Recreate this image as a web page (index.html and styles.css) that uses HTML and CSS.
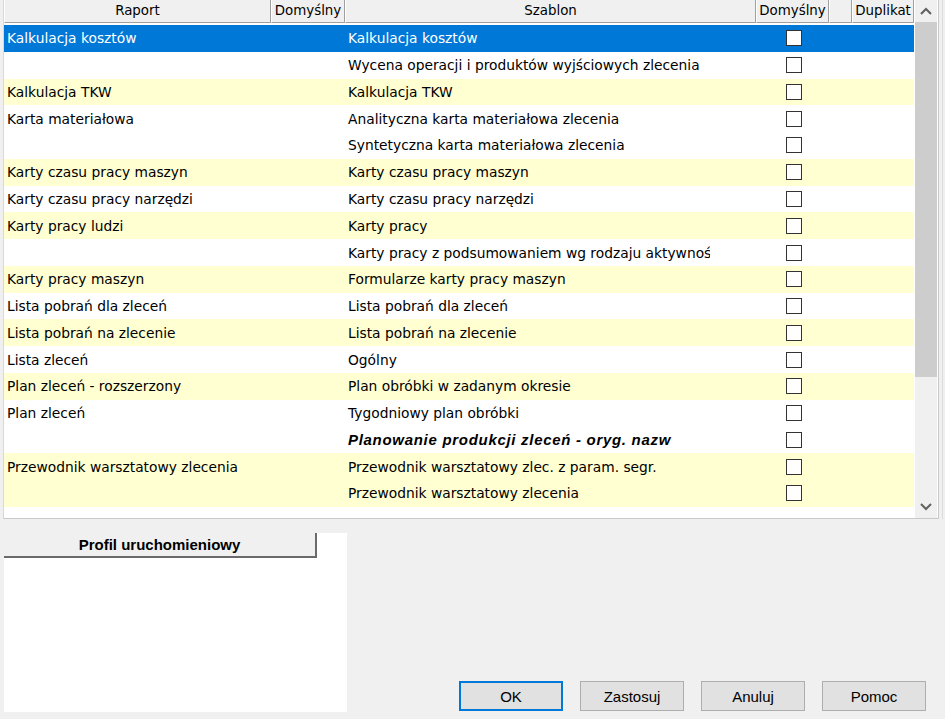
FILE: index.html
```html
<!DOCTYPE html>
<html lang="pl">
<head>
    <meta charset="UTF-8">
    <title>Raporty i szablony</title>
    <link rel="stylesheet" href="styles.css">
</head>
<body>
    <div class="grid-box">
        <div class="grid">
            <div class="row head">
                <div class="hcell">Raport</div>
                <div class="hcell">Domyślny</div>
                <div class="hcell">Szablon</div>
                <div class="hcell">Domyślny</div>
                <div class="hcell"></div>
                <div class="hcell">Duplikat</div>
            </div>
            <div class="rows">
                <div class="row sel"><div class="cell">Kalkulacja kosztów</div><div class="cell"></div><div class="cell">Kalkulacja kosztów</div><div class="cell chk"><span class="box"></span></div><div class="cell"></div><div class="cell"></div></div>
                <div class="row"><div class="cell"></div><div class="cell"></div><div class="cell">Wycena operacji i produktów wyjściowych zlecenia</div><div class="cell chk"><span class="box"></span></div><div class="cell"></div><div class="cell"></div></div>
                <div class="row alt"><div class="cell">Kalkulacja TKW</div><div class="cell"></div><div class="cell">Kalkulacja TKW</div><div class="cell chk"><span class="box"></span></div><div class="cell"></div><div class="cell"></div></div>
                <div class="row"><div class="cell">Karta materiałowa</div><div class="cell"></div><div class="cell">Analityczna karta materiałowa zlecenia</div><div class="cell chk"><span class="box"></span></div><div class="cell"></div><div class="cell"></div></div>
                <div class="row"><div class="cell"></div><div class="cell"></div><div class="cell">Syntetyczna karta materiałowa zlecenia</div><div class="cell chk"><span class="box"></span></div><div class="cell"></div><div class="cell"></div></div>
                <div class="row alt"><div class="cell">Karty czasu pracy maszyn</div><div class="cell"></div><div class="cell">Karty czasu pracy maszyn</div><div class="cell chk"><span class="box"></span></div><div class="cell"></div><div class="cell"></div></div>
                <div class="row"><div class="cell">Karty czasu pracy narzędzi</div><div class="cell"></div><div class="cell">Karty czasu pracy narzędzi</div><div class="cell chk"><span class="box"></span></div><div class="cell"></div><div class="cell"></div></div>
                <div class="row alt"><div class="cell">Karty pracy ludzi</div><div class="cell"></div><div class="cell">Karty pracy</div><div class="cell chk"><span class="box"></span></div><div class="cell"></div><div class="cell"></div></div>
                <div class="row"><div class="cell"></div><div class="cell"></div><div class="cell"><span class="clip">Karty pracy z podsumowaniem wg rodzaju aktywności</span></div><div class="cell chk"><span class="box"></span></div><div class="cell"></div><div class="cell"></div></div>
                <div class="row alt"><div class="cell">Karty pracy maszyn</div><div class="cell"></div><div class="cell">Formularze karty pracy maszyn</div><div class="cell chk"><span class="box"></span></div><div class="cell"></div><div class="cell"></div></div>
                <div class="row"><div class="cell">Lista pobrań dla zleceń</div><div class="cell"></div><div class="cell">Lista pobrań dla zleceń</div><div class="cell chk"><span class="box"></span></div><div class="cell"></div><div class="cell"></div></div>
                <div class="row alt"><div class="cell">Lista pobrań na zlecenie</div><div class="cell"></div><div class="cell">Lista pobrań na zlecenie</div><div class="cell chk"><span class="box"></span></div><div class="cell"></div><div class="cell"></div></div>
                <div class="row"><div class="cell">Lista zleceń</div><div class="cell"></div><div class="cell">Ogólny</div><div class="cell chk"><span class="box"></span></div><div class="cell"></div><div class="cell"></div></div>
                <div class="row alt"><div class="cell">Plan zleceń - rozszerzony</div><div class="cell"></div><div class="cell">Plan obróbki w zadanym okresie</div><div class="cell chk"><span class="box"></span></div><div class="cell"></div><div class="cell"></div></div>
                <div class="row"><div class="cell">Plan zleceń</div><div class="cell"></div><div class="cell">Tygodniowy plan obróbki</div><div class="cell chk"><span class="box"></span></div><div class="cell"></div><div class="cell"></div></div>
                <div class="row"><div class="cell"></div><div class="cell"></div><div class="cell bold">Planowanie produkcji zleceń - oryg. nazw</div><div class="cell chk"><span class="box"></span></div><div class="cell"></div><div class="cell"></div></div>
                <div class="row alt"><div class="cell">Przewodnik warsztatowy zlecenia</div><div class="cell"></div><div class="cell">Przewodnik warsztatowy zlec. z param. segr.</div><div class="cell chk"><span class="box"></span></div><div class="cell"></div><div class="cell"></div></div>
                <div class="row alt"><div class="cell"></div><div class="cell"></div><div class="cell">Przewodnik warsztatowy zlecenia</div><div class="cell chk"><span class="box"></span></div><div class="cell"></div><div class="cell"></div></div>
            </div>
        </div>
        <!-- pasek przewijania -->
        <div class="vscroll">
            <div class="arrow">
                <svg width="12" height="8" viewBox="0 0 12 8"><path d="M1 7 L6 2 L11 7" fill="none" stroke="#606060" stroke-width="2"/></svg>
            </div>
            <div class="thumb"></div>
            <div class="track"></div>
            <div class="arrow">
                <svg width="12" height="8" viewBox="0 0 12 8"><path d="M1 1 L6 6 L11 1" fill="none" stroke="#606060" stroke-width="2"/></svg>
            </div>
        </div>
    </div>
    <div class="side-edge"></div>

    <div class="bottom">
        <div class="profile">
            <div class="profile-head">Profil uruchomieniowy</div>
        </div>
        <div class="buttons">
            <button class="btn default">OK</button>
            <button class="btn">Zastosuj</button>
            <button class="btn">Anuluj</button>
            <button class="btn">Pomoc</button>
        </div>
    </div>
</body>
</html>
```

FILE: styles.css
```css
body {
    margin: 0;
    background-color: #f0f0f0;
    font-family: "DejaVu Sans", Verdana, sans-serif;
    font-size: 13.8px;
    color: #000;
    width: 945px;
    height: 719px;
    overflow: hidden;
    position: relative;
}
.grid-box {
    display: flex;
    margin-left: 3px;
    width: 934px;
    height: 518px;
    background-color: white;
    border-left: 1px solid #d8d8d8;
    border-bottom: 1px solid #c8c8c8;
    border-right: 1px solid #c8c8c8;
}
.grid {
    width: 910px;
    overflow: hidden;
}
.row {
    display: grid;
    grid-template-columns: 267px 74px 411px 73px 23px 62px;
    height: 26.78px;
    align-items: center;
    white-space: nowrap;
}
.row.head {
    height: 23px;
    margin-bottom: 2px;
    font-size: 13.4px;
}
.hcell {
    height: 23px;
    line-height: 22px;
    text-align: center;
    background-color: #f0f0f0;
    border-left: 1px solid #ffffff;
    border-right: 1px solid #a0a0a0;
    border-bottom: 1px solid #a0a0a0;
    box-sizing: border-box;
    overflow: hidden;
}
.cell {
    padding-left: 3px;
    overflow: hidden;
}
.row.alt {
    background-color: #ffffd2;
}
.row.sel {
    background-color: #0078d7;
    color: white;
}
.bold {
    font-weight: bold;
    font-style: italic;
    font-family: "Liberation Sans", Arial, sans-serif;
    font-size: 15px;
    letter-spacing: 0.7px;
}
.clip {
    display: inline-block;
    width: 362px;
    overflow: hidden;
    vertical-align: bottom;
}
.chk {
    padding-left: 0;
    display: flex;
    justify-content: center;
}
.box {
    width: 14px;
    height: 14px;
    border: 1px solid #333;
    background-color: white;
    margin-left: 2px;
}
.vscroll {
    width: 22px;
    display: flex;
    flex-direction: column;
    background-color: #f0f0f0;
    margin-left: 1px;
}
.arrow {
    height: 22px;
    display: flex;
    align-items: center;
    justify-content: center;
}
.thumb {
    height: 355px;
    background-color: #cdcdcd;
}
.track {
    flex: 1;
}
.side-edge {
    position: absolute;
    top: 0;
    left: 942px;
    width: 1px;
    height: 519px;
    background-color: #dcdcdc;
}
.bottom {
    display: flex;
    padding: 14px 0 0 4px;
}
.profile {
    width: 343px;
    height: 179px;
    background-color: white;
}
.profile-head {
    width: 313px;
    height: 25px;
    line-height: 24px;
    box-sizing: border-box;
    text-align: center;
    font-family: "Liberation Sans", Arial, sans-serif;
    font-size: 15px;
    font-weight: bold;
    background-color: #f0f0f0;
    border-right: 2px solid #6a6a6a;
    border-bottom: 2px solid #6a6a6a;
}
.buttons {
    display: flex;
    gap: 17px;
    align-self: flex-end;
    margin-left: 112px;
    margin-bottom: 1px;
}
.btn {
    width: 104px;
    height: 30px;
    background-color: #e1e1e1;
    border: 1px solid #adadad;
    font-family: "Liberation Sans", Arial, sans-serif;
    font-size: 15px;
    font-weight: normal;
    color: #000;
    padding: 0;
}
.btn.default {
    border: 2px solid #0078d7;
}
```
